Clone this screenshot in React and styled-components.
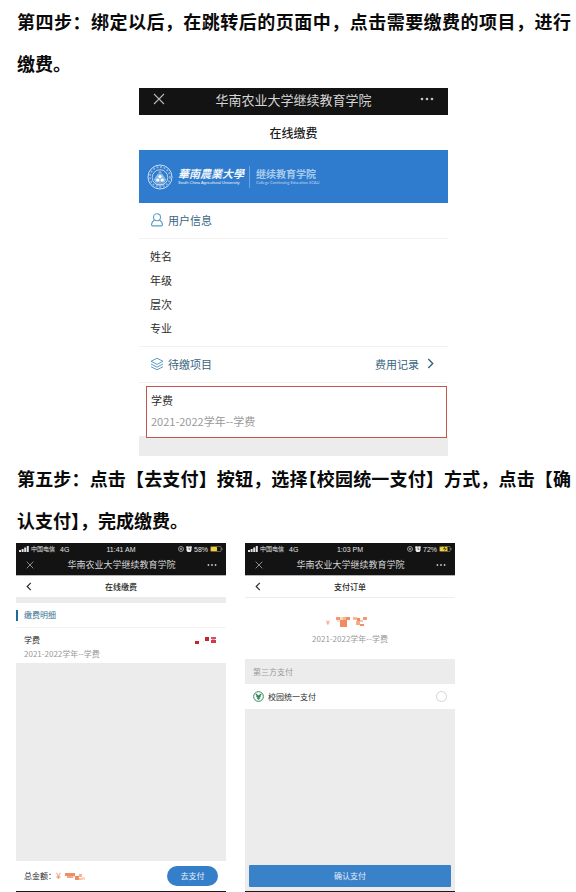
import React from 'react';
import styled, { createGlobalStyle } from 'styled-components';

const GlobalStyle = createGlobalStyle`
  * {
    box-sizing: border-box;
  }

  body {
    margin: 0;
    background: #fff;
    color: #2b2b2b;
    font-family: 'Noto Sans CJK SC', sans-serif;
  }

  button {
    padding: 0;
    border: 0;
    background: none;
    color: inherit;
    font: inherit;
    cursor: pointer;
  }

  a {
    color: inherit;
    text-decoration: none;
  }

  svg {
    display: block;
    flex: none;
  }
`;

const Page = styled.main`
  display: flex;
  flex-direction: column;
  min-height: 100vh;
  padding: 0 5px 0 16px;
`;

const Step = styled.p`
  margin: 0;
  padding-left: 1px;
  color: #0a0a0a;
  font-size: 18px;
  font-weight: 700;
  line-height: 42px;
  text-align: justify;
`;

const HalfBracket = styled.span`
  font-feature-settings: 'halt';
`;

const Portal = styled.section`
  width: 100%;
  max-width: 309px;
  margin: 4px auto 1px;
  font-size: 11px;
`;

const NavBar = styled.header`
  display: grid;
  grid-template-columns: 1fr auto 1fr;
  align-items: center;
  height: ${props => (props.$small ? '19px' : '27px')};
  padding: ${props => (props.$small ? '0 9px 2px 10px' : '0 14px 5px')};
  background: #131313;
  color: #d6d6d6;
  font-size: ${props => (props.$small ? '9px' : '13px')};
  line-height: 1;

  button:last-child {
    justify-self: end;
  }
`;

const PageTitle = styled.h2`
  margin: 0;
  color: #1c1c1c;
  font-size: 12px;
  font-weight: 500;
  line-height: 35px;
  text-align: center;
`;

const Banner = styled.div`
  display: flex;
  align-items: center;
  height: 53px;
  padding: 0 8px;
  background: #2f7bcd;
  color: #f0f6fc;
`;

const BrandText = styled.div`
  display: flex;
  flex-direction: column;
  gap: 2px;
  padding: 0 5px;
  line-height: 1;
  white-space: nowrap;

  & + & {
    border-left: 1px solid #6ba3df;
    padding: 3px 6px;
  }
`;

const University = styled.strong`
  font-size: 11px;
  font-style: italic;
  font-weight: 700;
`;

const College = styled.span`
  color: #a9cbef;
  font-size: 10px;
  font-weight: 700;
`;

const Latin = styled.small`
  font-family: ${props => (props.$dim ? 'Lato' : "'Liberation Sans'")}, sans-serif;
  font-size: 4px;
  opacity: ${props => (props.$dim ? 0.7 : 1)};
`;

const SectionHead = styled.div`
  display: flex;
  align-items: center;
  gap: 4px;
  height: 36px;
  padding: 0 14px 2px 11px;
  border-bottom: 1px solid #f1f1f1;
  color: #3a6580;

  h3 {
    margin: 0;
    font-size: 11px;
    font-weight: 400;
  }
`;

const RecordLink = styled.a`
  display: flex;
  align-items: center;
  gap: 8px;
  margin-left: auto;
`;

const UserFields = styled.dl`
  margin: 0;
  padding: 5px 11px 6px;
  border-bottom: 1px solid #f1f1f1;
  line-height: 24px;

  div {
    display: flex;
  }
`;

const FeeLink = styled.a`
  position: relative;
  display: block;
  margin: 3px 1px 0 7px;
  padding: 3px 4px 5px;
  border: 1px solid #c4574b;
  background: #fff;
  line-height: 21px;
`;

const Muted = styled.span`
  display: block;
  color: #999;
`;

const PortalFoot = styled.div`
  height: 20px;
  margin-top: -2px;
  background: #ececec;
`;

const Phones = styled.div`
  display: grid;
  flex: 1;
  grid-template-columns: repeat(2, minmax(0, 210px));
  gap: 19px;
  margin-top: 2px;
`;

const Phone = styled.section`
  display: flex;
  flex-direction: column;
  min-height: 349px;
  border-bottom: 1px solid #1a1a1a;
  background: #fff;
  font-size: 8px;
  line-height: 12px;
`;

const StatusBar = styled.div`
  display: grid;
  grid-template-columns: 1fr auto 1fr;
  align-items: center;
  height: 13px;
  padding: 0 3px 1px;
  background: #131313;
  color: #e2e2e2;
  font-family: 'Liberation Sans', 'Noto Sans CJK SC', sans-serif;
  font-size: 7px;
  line-height: 1;
  white-space: nowrap;
`;

const StatusGroup = styled.span`
  display: flex;
  align-items: center;
  justify-content: ${props => (props.$end ? 'flex-end' : 'flex-start')};
  gap: 2px;
`;

const Carrier = styled.span`
  margin-right: 3px;
  font-size: 6px;
`;

const PhoneTitle = styled.header`
  display: grid;
  grid-template-columns: 1fr auto 1fr;
  align-items: center;
  height: 23px;
  padding: 0 10px;
  border-top: 1px solid #b5b5b5;
  border-bottom: 1px solid #ededed;

  h2 {
    margin: 0;
    color: #222;
    font-size: 8px;
    font-weight: 500;
  }
`;

const DetailHead = styled.h3`
  display: flex;
  align-items: center;
  height: 30px;
  margin: 0;
  border-top: 5px solid #ececec;
  border-bottom: 1px solid #f3f3f3;
  color: #34718f;
  font-size: 8px;
  font-weight: 400;

  &::before {
    width: 2px;
    height: 11px;
    margin-right: 6px;
    background: #1f6a9c;
    content: '';
  }
`;

const DetailRow = styled.div`
  display: flex;
  justify-content: space-between;
  height: 35px;
  padding: 6px 9px 0 8px;

  svg {
    margin-top: 2px;
  }
`;

const FeeYear = styled.span`
  display: block;
  margin-top: 2px;
  color: #999;
  font-size: 8px;
`;

const Backdrop = styled.div`
  flex: 1;
  background: #ececec;
`;

const PayBar = styled.footer`
  display: flex;
  align-items: center;
  height: 30px;
  padding: 0 8px;

  svg {
    margin-left: 4px;
  }
`;

const PillButton = styled.button`
  width: 51px;
  height: 20px;
  margin-left: auto;
  border-radius: 10px;
  background: #357fca;
  color: #e6effa;
`;

const Amount = styled.div`
  display: flex;
  flex-direction: column;
  align-items: center;
  height: 61px;
  padding-top: 18px;

  ${FeeYear} {
    margin-top: 5px;
  }
`;

const MethodHead = styled.h3`
  margin: 0;
  padding-left: 8px;
  background: #ececec;
  color: #999;
  font-size: 8px;
  font-weight: 400;
  line-height: 25px;
`;

const Method = styled.label`
  display: flex;
  align-items: center;
  gap: 4px;
  height: 25px;
  padding: 0 8px;
`;

const Radio = styled.input`
  width: 11px;
  height: 11px;
  margin: 0 0 0 auto;
  border: 1px solid #d3d3d3;
  border-radius: 50%;
  appearance: none;

  &:checked {
    background: #357fca;
  }
`;

const ConfirmBar = styled.footer`
  padding: 0 4px 4px;
  background: #ececec;
`;

const ConfirmButton = styled.button`
  display: block;
  width: 100%;
  height: 22px;
  border-radius: 1px;
  background: #3981c9;
  color: #e6effa;
`;

const CloseIcon = ({ size }) => (
  <svg width={size} height={size} viewBox="0 0 12 12" stroke="#b8b8b8" strokeWidth="1.1">
    <path d="M1 1l10 10M11 1L1 11" />
  </svg>
);

const MoreIcon = ({ size }) => (
  <svg width={size} height="4" viewBox="0 0 14 4" fill="#c4c4c4">
    <circle cx="2" cy="2" r="1.3" />
    <circle cx="7" cy="2" r="1.3" />
    <circle cx="12" cy="2" r="1.3" />
  </svg>
);

const UserIcon = () => (
  <svg width="14" height="14" viewBox="0 0 14 14" fill="none" stroke="#5b9dc6" strokeWidth="1.1">
    <circle cx="7" cy="4.3" r="3.5" />
    <path d="M4.6 7.2C2.6 8 1.7 9.7 1.5 11.6c0 1 .5 1.3 1.2 1.3h8.6c.7 0 1.2-.3 1.2-1.3C12.3 9.7 11.4 8 9.4 7.2" />
  </svg>
);

const LayersIcon = () => (
  <svg width="14" height="14" viewBox="0 0 14 14" fill="none" stroke="#5b9dc6" strokeWidth="1" strokeLinejoin="round">
    <path d="M7 1.2L13 4.3 7 7.4 1 4.3z" />
    <path d="M1 7l6 3.1L13 7M1 9.7l6 3.1 6-3.1" />
  </svg>
);

const ArrowIcon = ({ left, width, height }) => (
  <svg width={width} height={height} viewBox="0 0 6 10" fill="none" stroke="currentColor" strokeWidth="1.3">
    <path d={left ? 'M5 1L1 5l4 4' : 'M1 1l4 4-4 4'} />
  </svg>
);

const Crest = () => (
  <svg width="26" height="26" viewBox="0 0 26 26" fill="none" stroke="#dcebf9">
    <circle cx="13" cy="13" r="12" strokeWidth="0.9" />
    <circle cx="13" cy="13" r="10" strokeWidth="1.8" strokeDasharray="2 1.6" opacity="0.5" />
    <circle cx="13" cy="13.5" r="7.8" strokeWidth="0.8" />
    <path d="M13 6.2l2 3.3h-4zM10.5 10h5l3.7 5.5-1.2 2.5H8l-1.2-2.5z" fill="#8fbae6" stroke="none" />
    <path d="M8 19h10M9.5 20.5h7" strokeWidth="0.7" />
    <g fill="#fff" stroke="none">
      <circle cx="13" cy="12.6" r="1.6" />
      <circle cx="10.8" cy="16" r="1.6" />
      <circle cx="15.2" cy="16" r="1.6" />
    </g>
  </svg>
);

const SignalIcon = () => (
  <svg width="10" height="6" viewBox="0 0 10 6" fill="#e2e2e2">
    <path d="M0 4h2v2H0zM2.6 3h2v3h-2zM5.2 1.5h2V6h-2zM7.8 0h2v6h-2z" />
  </svg>
);

const LockIcon = () => (
  <svg width="6" height="6" viewBox="0 0 6 6" fill="none" stroke="#cfcfcf" strokeWidth="0.7">
    <circle cx="3" cy="3" r="2.5" />
    <path d="M1.8 3h2.4M3 1.8v2.4" />
  </svg>
);

const AlarmIcon = () => (
  <svg width="6" height="6" viewBox="0 0 6 6">
    <path d="M0 1l1-1 .7.5h2.6L5 0l1 1-.5 1v2.5L4.500 6h-3L.5 4.500V2z" fill="#ececec" />
    <path d="M3 1.6v1.700h1.300" fill="none" stroke="#333" strokeWidth="0.7" />
  </svg>
);

const BatteryIcon = ({ charging }) => (
  <svg width="13" height="6" viewBox="0 0 13 6">
    <rect x="0.4" y="0.4" width="10.800" height="5.200" rx="1.3" fill="none" stroke="#8c8350" strokeWidth="0.8" />
    <rect x="1" y="1" width={charging ? 7.5 : 6} height="4" rx="0.6" fill="#f3cf35" />
    <path d="M12 2v2" stroke="#888" strokeWidth="0.8" />
    {charging && <path d="M5.5 0.5L4 3.3h2L5 5.5l3-3H6z" fill="#4a421a" />}
  </svg>
);

const YuanBadge = () => (
  <svg width="11" height="11" viewBox="0 0 10 10" fill="none" stroke="#2f8a5b">
    <circle cx="5" cy="5" r="4.4" strokeWidth="0.9" />
    <path d="M2.6 2.7L5 5l2.4-2.3M5 4.8V8M3 4.9h4M3.5 6.3h3" strokeWidth="1.3" />
  </svg>
);

// each block is [x, y, width, height, colour]
const MOSAICS = {
  price: {
    width: 22,
    height: 8,
    blocks: [
      [0, 5, 4, 3, '#c9222f'], [10, 1, 4, 4, '#c02637'], [8, 5, 1, 1, '#f7d6d8'],
      [16, 1, 5, 2, '#d8515d'], [17, 3, 3, 1, '#eb9da4'], [16, 4, 5, 3, '#d23a4a'],
    ],
  },
  order: {
    width: 32,
    height: 12,
    blocks: [
      [0, 1, 4, 3, '#f29a74'], [4, 1, 3, 3, '#fbd5c4'], [7, 1, 3, 3, '#f6b294'], [10, 1, 4, 3, '#f08e64'],
      [4, 4, 7, 7, '#f28c5f'], [1, 4, 3, 2, '#fce0d4'], [17, 1, 4, 3, '#f8b99e'], [21, 2, 3, 3, '#f08a5e'],
      [24, 4, 3, 2, '#f8c4ad'], [27, 1, 4, 3, '#f19a74'], [20, 5, 4, 4, '#f6ac8c'], [24, 8, 4, 2, '#f08e64'],
    ],
  },
  total: {
    width: 21,
    height: 9,
    blocks: [
      [0, 1, 10, 3, '#ef8d64'], [2, 4, 6, 2, '#f4a685'], [10, 4, 4, 4, '#f08c60'], [8, 4, 2, 1, '#fbd5c4'],
      [14, 2, 3, 3, '#f6b294'], [14, 6, 3, 2, '#f8c4ad'], [17, 5, 3, 3, '#fad8c9'],
    ],
  },
};

const Mosaic = ({ name }) => {
  const { width, height, blocks } = MOSAICS[name];
  return (
    <svg width={width} height={height} viewBox={`0 0 ${width} ${height}`}>
      {blocks.map(([x, y, w, h, fill]) => (
        <rect key={`${x}-${y}`} x={x} y={y} width={w} height={h} fill={fill} />
      ))}
    </svg>
  );
};

const AmountLine = styled.div`
  display: flex;
  align-items: center;
  gap: 6px;
  height: 12px;
  margin-left: -6px;
`;

const Currency = styled.span`
  color: #f08a5c;
  font-size: ${props => (props.$small ? '7px' : '9px')};
`;

const WebNav = ({ small }) => (
  <NavBar $small={small}>
    <button type="button" aria-label="关闭">
      <CloseIcon size={small ? 8 : 12} />
    </button>
    <span>华南农业大学继续教育学院</span>
    <button type="button" aria-label="更多">
      <MoreIcon size={small ? 10 : 14} />
    </button>
  </NavBar>
);

const PhoneTop = ({ time, battery, charging, title }) => (
  <>
    <StatusBar>
      <StatusGroup>
        <SignalIcon />
        <Carrier>中国电信</Carrier>
        <span>4G</span>
      </StatusGroup>
      <span>{time}</span>
      <StatusGroup $end>
        <LockIcon />
        <AlarmIcon />
        <span>{battery}</span>
        <BatteryIcon charging={charging} />
      </StatusGroup>
    </StatusBar>
    <WebNav small />
    <PhoneTitle>
      <button type="button" aria-label="返回">
        <ArrowIcon left width={6} height={9} />
      </button>
      <h2>{title}</h2>
    </PhoneTitle>
  </>
);

const userFields = ['姓名', '年级', '层次', '专业'];

const App = () => (
  <>
    <GlobalStyle />
    <Page lang="zh-CN">
      <Step>第四步：绑定以后，在跳转后的页面中，点击需要缴费的项目，进行缴费。</Step>

      <Portal>
        <WebNav />
        <PageTitle>在线缴费</PageTitle>
        <Banner>
          <Crest />
          <BrandText>
            <University>華南農業大學</University>
            <Latin>South China Agricultural University</Latin>
          </BrandText>
          <BrandText>
            <College>继续教育学院</College>
            <Latin $dim>College Continuing Education SCAU</Latin>
          </BrandText>
        </Banner>
        <SectionHead>
          <UserIcon />
          <h3>用户信息</h3>
        </SectionHead>
        <UserFields>
          {userFields.map(field => (
            <div key={field}>
              <dt>{field}</dt>
              <dd />
            </div>
          ))}
        </UserFields>
        <SectionHead>
          <LayersIcon />
          <h3>待缴项目</h3>
          <RecordLink href="#records">
            费用记录
            <ArrowIcon width={7} height={11} />
          </RecordLink>
        </SectionHead>
        <FeeLink href="#tuition">
          学费
          <Muted>2021-2022学年--学费</Muted>
        </FeeLink>
        <PortalFoot />
      </Portal>

      <Step>
        第五步：点击【去支付】按钮，选择<HalfBracket>【</HalfBracket>校园统一支付】方式，点击【确<wbr />认支付】，完成缴费。
      </Step>

      <Phones>
        <Phone>
          <PhoneTop time="11:41 AM" battery="58%" title="在线缴费" />
          <DetailHead>缴费明细</DetailHead>
          <DetailRow>
            <div>
              学费
              <FeeYear>2021-2022学年--学费</FeeYear>
            </div>
            <Mosaic name="price" />
          </DetailRow>
          <Backdrop />
          <PayBar>
            总金额：
            <Currency>¥</Currency>
            <Mosaic name="total" />
            <PillButton type="button">去支付</PillButton>
          </PayBar>
        </Phone>

        <Phone>
          <PhoneTop time="1:03 PM" battery="72%" charging title="支付订单" />
          <Amount>
            <AmountLine>
              <Currency $small>¥</Currency>
              <Mosaic name="order" />
            </AmountLine>
            <FeeYear>2021-2022学年--学费</FeeYear>
          </Amount>
          <MethodHead>第三方支付</MethodHead>
          <Method>
            <YuanBadge />
            校园统一支付
            <Radio type="radio" name="method" value="campus" />
          </Method>
          <Backdrop />
          <ConfirmBar>
            <ConfirmButton type="button">确认支付</ConfirmButton>
          </ConfirmBar>
        </Phone>
      </Phones>
    </Page>
  </>
);

export default App;
